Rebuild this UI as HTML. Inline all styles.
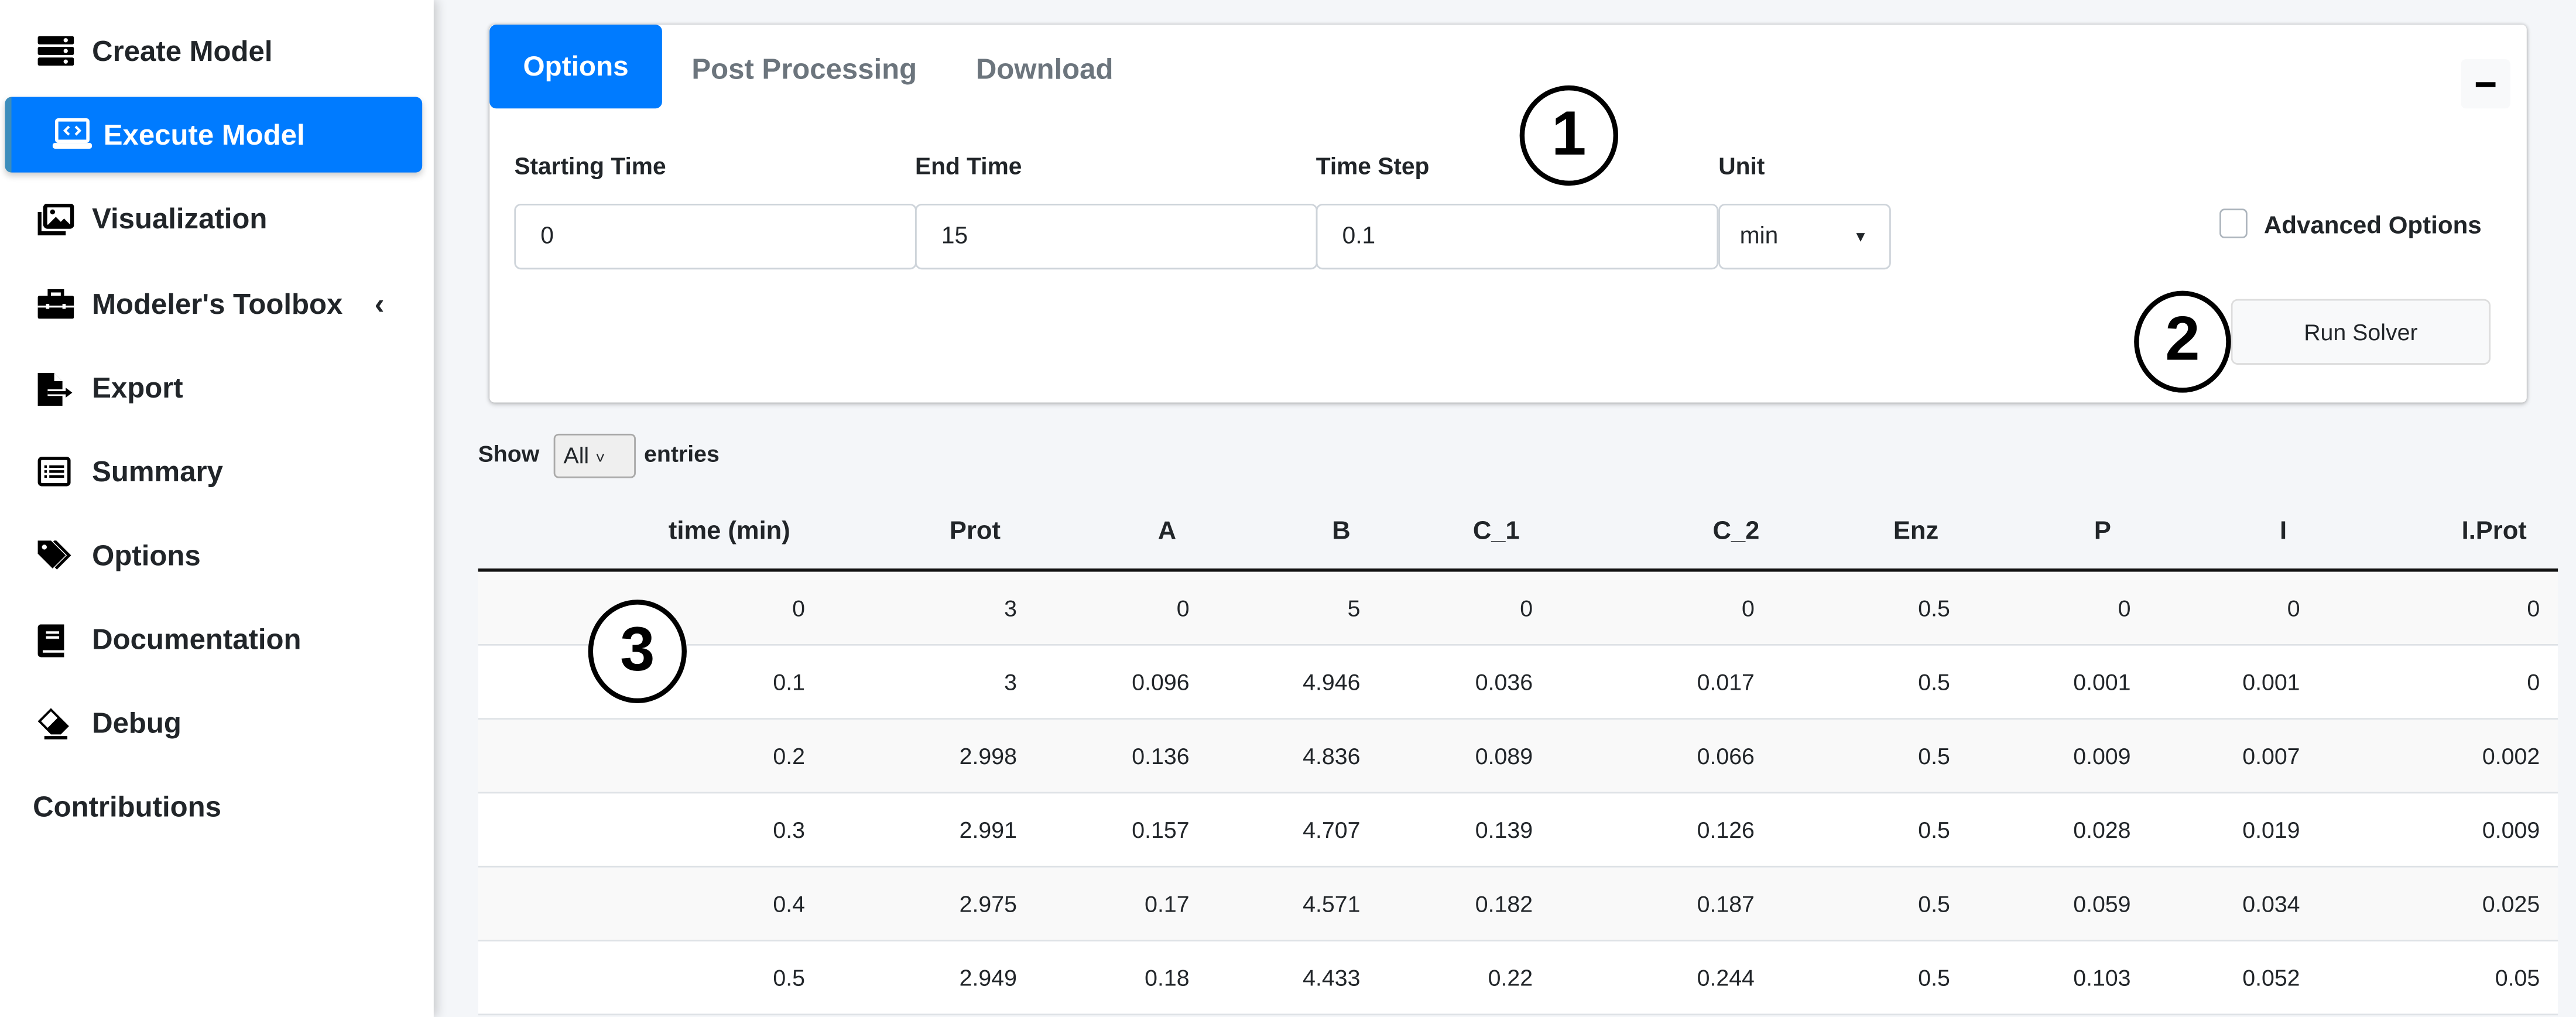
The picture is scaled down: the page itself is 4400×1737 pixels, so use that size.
<!DOCTYPE html>
<html><head><meta charset="utf-8"><style>
*{box-sizing:border-box;margin:0;padding:0}
html,body{width:4400px;height:1737px;overflow:hidden;background:#f4f6f9}
#w{position:absolute;left:0;top:0;width:1568px;height:619px;transform:scale(2.80612);transform-origin:0 0;font-family:"Liberation Sans",sans-serif;color:#212529;background:#f4f6f9}
.a{position:absolute}
#side{left:0;top:0;width:264px;height:619px;background:#fff;box-shadow:2px 0 6px rgba(0,0,0,.18)}
.ni{position:absolute;left:0;width:264px;height:30px;font-weight:bold;font-size:17.5px;line-height:30px}
.ni span{position:absolute;left:56px}
.ni svg{position:absolute;left:23px;top:6px}
#act{left:3px;top:59px;width:254px;height:46px;background:#007bff;border-radius:4px;box-shadow:0 2px 4px rgba(0,0,0,.2);border-left:4px solid #3c8dbc;color:#fff}
#card{left:298px;top:15px;width:1240px;height:230px;background:#fff;border-radius:3px;box-shadow:0 0 2px rgba(0,0,0,.2),0 1px 3px rgba(0,0,0,.2)}
.lbl{font-weight:bold;font-size:14.5px}
.inp{height:40px;border:1px solid #ced4da;border-radius:4px;background:#fff;font-size:14.5px;line-height:38px;padding-left:15px}
.circ{position:absolute;z-index:5;border:3.5px solid #000;border-radius:50%;background:#fff;font-weight:bold;text-align:center;color:#000;font-size:38px}
.th{font-weight:bold;font-size:15.5px;text-align:right;top:315px}
.row{position:absolute;left:291px;width:1266px;height:45px;border-bottom:1px solid #dee2e6}
.td{position:absolute;font-size:14px;text-align:right;line-height:44px;top:0}
</style></head><body><div id="w">
<div class="a" id="side">
 <div class="ni" style="top:16px"><svg width="22" height="18" viewBox="0 0 22 18"><rect x="0" y="0" width="22" height="5" rx="1"/><rect x="0" y="6.5" width="22" height="5" rx="1"/><rect x="0" y="13" width="22" height="5" rx="1"/><circle cx="17" cy="9" r="1.3" fill="#fff"/><circle cx="17" cy="15.5" r="1.3" fill="#fff"/><circle cx="17" cy="2.5" r="1.3" fill="#fff"/></svg><span>Create Model</span></div>
 <div class="a ni" id="act" style="left:3px;top:59px;width:254px;height:46px;line-height:46px"><svg width="24" height="20" viewBox="0 0 24 20" style="left:25px;top:13px"><rect x="2.5" y="1" width="19" height="13" rx="1" fill="none" stroke="#fff" stroke-width="2"/><rect x="0" y="15" width="24" height="3.5" rx="1.5" fill="#fff"/><path d="M10 5l-2.5 2.5L10 10M14 5l2.5 2.5L14 10" fill="none" stroke="#fff" stroke-width="1.5"/></svg><span style="left:56px">Execute Model</span></div>
 <div class="ni" style="top:118px"><svg width="22" height="20" viewBox="0 0 22 20"><path d="M1 5v13h16" fill="none" stroke="#000" stroke-width="2.5"/><rect x="4.5" y="1" width="16.5" height="13" rx="1.5" fill="none" stroke="#000" stroke-width="2.5"/><path d="M6 13l5-5 3 3 2-2 4 4z"/><circle cx="9" cy="5" r="1.5"/></svg><span>Visualization</span></div>
 <div class="ni" style="top:170px"><svg width="22" height="18" viewBox="0 0 22 18"><path d="M7 4V1h8v3" fill="none" stroke="#000" stroke-width="2"/><rect x="0" y="4" width="22" height="14" rx="1"/><rect x="0" y="10" width="22" height="1.2" fill="#fff"/><rect x="5" y="9" width="2" height="3" fill="#fff"/><rect x="15" y="9" width="2" height="3" fill="#fff"/></svg><span>Modeler's Toolbox</span><b style="position:absolute;left:228px;font-size:18px">‹</b></div>
 <div class="ni" style="top:221px"><svg width="22" height="20" viewBox="0 0 22 20"><path d="M0 0h10l5 5v15H0z"/><path d="M10 0v5h5" fill="#fff"/><path d="M6 12h10" stroke="#fff" stroke-width="4"/><path d="M6 12h12" stroke="#000" stroke-width="2"/><path d="M17 9l4 3-4 3z"/></svg><span>Export</span></div>
 <div class="ni" style="top:272px"><svg width="20" height="18" viewBox="0 0 20 18"><rect x="1" y="1" width="18" height="16" rx="1.5" fill="none" stroke="#000" stroke-width="2"/><path d="M7 6h9M7 9h9M7 12h9M4 6h1.5M4 9h1.5M4 12h1.5" stroke="#000" stroke-width="1.6"/></svg><span>Summary</span></div>
 <div class="ni" style="top:323px"><svg width="24" height="22" viewBox="0 0 24 22"><path d="M0 0h8l9 9-8 8-9-9z"/><circle cx="4" cy="4" r="1.5" fill="#fff"/><path d="M10 0l9 9-8 8" fill="none" stroke="#000" stroke-width="1.8"/></svg><span>Options</span></div>
 <div class="ni" style="top:374px"><svg width="18" height="20" viewBox="0 0 18 20"><path d="M2 0h14v20H2a2 2 0 0 1-2-2V2a2 2 0 0 1 2-2z"/><path d="M5 5h8M5 8h8M3 16.5h13" stroke="#fff" stroke-width="1.5"/></svg><span>Documentation</span></div>
 <div class="ni" style="top:425px"><svg width="22" height="20" viewBox="0 0 22 20"><path d="M8 0L0 8l8 8h6l5-5z" fill="#000"/><path d="M8 2L2 8l4 4 6-6z" fill="#fff"/><rect x="4" y="17" width="14" height="2"/></svg><span>Debug</span></div>
 <div class="ni" style="top:476px"><span style="left:20px">Contributions</span></div>
</div>

<div class="a" id="card">
 <div class="a" style="left:0;top:0;width:105px;height:51px;background:#007bff;border-radius:4px;color:#fff;font-weight:bold;font-size:17px;line-height:51px;text-align:center">Options</div>
 <div class="a" style="left:123px;top:17px;font-weight:bold;font-size:17.5px;color:#6c757d">Post Processing</div>
 <div class="a" style="left:296px;top:17px;font-weight:bold;font-size:17.5px;color:#6c757d">Download</div>
 <div class="a" style="left:1200px;top:21px;width:30px;height:30px;background:#f8f9fa;border-radius:3px"><div class="a" style="left:9px;top:14px;width:12px;height:3px;background:#000"></div></div>
 <div class="a lbl" style="left:15px;top:79px">Starting Time</div>
 <div class="a lbl" style="left:259px;top:79px">End Time</div>
 <div class="a lbl" style="left:503px;top:79px">Time Step</div>
 <div class="a lbl" style="left:748px;top:79px">Unit</div>
 <div class="a inp" style="left:15px;top:109px;width:245px">0</div>
 <div class="a inp" style="left:259px;top:109px;width:245px">15</div>
 <div class="a inp" style="left:503px;top:109px;width:245px">0.1</div>
 <div class="a inp" style="left:748px;top:109px;width:105px;padding-left:12px">min<span style="position:absolute;right:13px;top:0;font-size:9px">▼</span></div>
 <div class="a" style="left:1053px;top:112px;width:17px;height:18px;border:1px solid #adb5bd;border-radius:3px"></div>
 <div class="a lbl" style="left:1080px;top:114px;font-size:15px">Advanced Options</div>
 <div class="a" style="left:1060px;top:167px;width:158px;height:40px;background:#f8f9fa;border:1px solid #ddd;border-radius:4px;font-size:14px;line-height:38px;text-align:center">Run Solver</div>
</div>

<div class="circ" style="left:925px;top:52px;width:60px;height:61px;line-height:54px">1</div>
<div class="circ" style="left:1299px;top:177px;width:59px;height:62px;line-height:55px">2</div>
<div class="circ" style="left:358px;top:365px;width:60px;height:63px;line-height:56px">3</div>

<div class="a" style="left:291px;top:268px;font-weight:bold;font-size:14px">Show</div>
<div class="a" style="left:337px;top:264px;width:50px;height:27px;border:1px solid #aaa;border-radius:3px;background:#efefef;font-size:14px;line-height:25px;padding-left:5px">All <span style="font-size:10px">˅</span></div>
<div class="a" style="left:392px;top:268px;font-weight:bold;font-size:14px">entries</div>

<div class="a th" style="right:1087px">time (min)</div>
<div class="a th" style="right:959px">Prot</div>
<div class="a th" style="right:852px">A</div>
<div class="a th" style="right:746px">B</div>
<div class="a th" style="right:643px">C_1</div>
<div class="a th" style="right:497px">C_2</div>
<div class="a th" style="right:388px">Enz</div>
<div class="a th" style="right:283px">P</div>
<div class="a th" style="right:176px">I</div>
<div class="a th" style="right:30px">I.Prot</div>
<div class="a" style="left:291px;top:346px;width:1266px;height:2px;background:#111"></div>

<div id="rows"></div>
<script>
var d=[["0","3","0","5","0","0","0.5","0","0","0"],["0.1","3","0.096","4.946","0.036","0.017","0.5","0.001","0.001","0"],["0.2","2.998","0.136","4.836","0.089","0.066","0.5","0.009","0.007","0.002"],["0.3","2.991","0.157","4.707","0.139","0.126","0.5","0.028","0.019","0.009"],["0.4","2.975","0.17","4.571","0.182","0.187","0.5","0.059","0.034","0.025"],["0.5","2.949","0.18","4.433","0.22","0.244","0.5","0.103","0.052","0.05"]];
var r=[490,619,724,828,933,1068,1187,1297,1400,1546],h="";
d.forEach(function(row,i){h+='<div class="row" style="top:'+(348+i*45)+'px;background:'+(i%2?'#fff':'#f9f9f9')+'">';row.forEach(function(v,j){h+='<div class="td" style="right:'+(1557-r[j])+'px">'+v+'</div>'});h+='</div>'});
document.getElementById('rows').innerHTML=h;
</script>
</div></body></html>
